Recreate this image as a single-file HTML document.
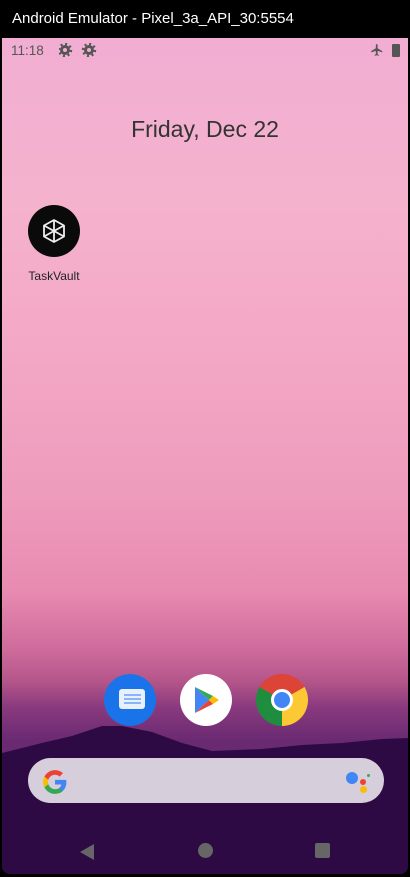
<!DOCTYPE html>
<html><head><style>
*{margin:0;padding:0;box-sizing:border-box}
body{width:410px;height:877px;background:#000;position:relative;overflow:hidden;font-family:"Liberation Sans",sans-serif}
.title{position:absolute;left:12px;top:10px;color:#fff;font-size:15px}
.screen{position:absolute;left:2px;top:38px;width:406px;height:836px;border-radius:0 0 8px 8px;overflow:hidden;
background:linear-gradient(180deg,#f1aed2 0%,#f5b2cd 20%,#f3a6c4 40%,#ee9bbc 55%,#e88bb1 66%,#cf6c9c 73%,#b4558a 77%,#8a3a7e 80%,#6a2a72 84%)}
.st{position:absolute;top:5px;left:9px;color:#555;font-size:13.5px}
.date{position:absolute;top:78px;width:100%;text-align:center;font-size:23px;color:#333}
.lbl{position:absolute;left:0;width:104px;text-align:center;top:231px;font-size:12px;color:#222}
.search{position:absolute;left:26px;top:720px;width:356px;height:45px;border-radius:23px;background:#d6cfdb}
</style></head><body>
<div class="title">Android Emulator - Pixel_3a_API_30:5554</div>
<div class="screen">
<div class="st">11:18</div>
<svg style="position:absolute;left:57px;top:5px" width="40" height="14" viewBox="0 0 40 14"><g fill="#555"><circle cx="6" cy="7" r="5"/><circle cx="30" cy="7" r="5"/></g><g fill="#f2aed0"><circle cx="6" cy="7" r="2"/><circle cx="30" cy="7" r="2"/></g><g stroke="#555" stroke-width="2.4" stroke-dasharray="2 2.7"><circle cx="6" cy="7" r="6" fill="none"/><circle cx="30" cy="7" r="6" fill="none"/></g></svg>
<svg style="position:absolute;left:368px;top:5px" width="14" height="14" viewBox="0 0 24 24"><path fill="#555" d="M21 16v-2l-8-5V3.5a1.5 1.5 0 0 0-3 0V9l-8 5v2l8-2.5V19l-2 1.5V22l3.5-1 3.5 1v-1.5L13 19v-5.5z"/></svg>
<div style="position:absolute;left:390px;top:6px;width:8px;height:13px;background:#555;border-radius:1px"></div>
<div class="date">Friday, Dec 22</div>
<div style="position:absolute;left:26px;top:167px;width:52px;height:52px;border-radius:50%;background:#0a0a0a"></div>
<svg style="position:absolute;left:38px;top:179px" width="28" height="28" viewBox="0 0 28 28" fill="none" stroke="#eee" stroke-width="1.8" stroke-linejoin="round"><path d="M14 3 24 8.5v11L14 25 4 19.5v-11zM4 8.5 14 14 24 8.5M14 14v11M4 19.5 14 14 24 19.5M14 3v11"/></svg>
<div class="lbl" style="left:0">TaskVault</div>
<svg style="position:absolute;left:0;top:680px" width="406" height="156" viewBox="0 0 406 156"><path fill="#2d0a44" d="M0 35 L40 25 70 18 100 8 120 8 150 14 180 25 210 33 260 31 300 27 340 25 380 21 406 20 V156 H0z"/></svg>
<div style="position:absolute;left:102px;top:636px;width:52px;height:52px;border-radius:50%;background:#1a73e8"></div>
<div style="position:absolute;left:117px;top:651px;width:26px;height:20px;border-radius:3px;background:#e8f0fe"></div>
<div style="position:absolute;left:122px;top:656px;width:17px;height:2px;background:#8ab4f8;box-shadow:0 4px #8ab4f8,0 8px #8ab4f8"></div>
<div style="position:absolute;left:178px;top:636px;width:52px;height:52px;border-radius:50%;background:#fff"></div>
<svg style="position:absolute;left:191px;top:647px" width="28" height="30" viewBox="0 0 28 30"><path fill="#4285f4" d="M2 2 16 15 2 28z"/><path fill="#34a853" d="M2 2 20 11 16 15z"/><path fill="#ea4335" d="M2 28 16 15 20 19z"/><path fill="#fbbc04" d="M20 11 26 15 20 19 16 15z"/></svg>
<div style="position:absolute;left:254px;top:636px;width:52px;height:52px;border-radius:50%;background:conic-gradient(from -60deg,#db4437 0 120deg,#fcc934 120deg 240deg,#1e8e3e 240deg 360deg)"></div>
<div style="position:absolute;left:269px;top:651px;width:22px;height:22px;border-radius:50%;background:#4285f4;border:3px solid #fff"></div>
<div class="search"></div>
<svg style="position:absolute;left:40px;top:731px" width="26" height="26" viewBox="0 0 48 48"><path fill="#4285f4" d="M45 24.5c0-1.6-.1-3-.4-4.5H24v8.5h11.8c-.5 2.7-2 5-4.4 6.6v5.5h7C42.6 36.7 45 31.1 45 24.5z"/><path fill="#34a853" d="M24 46c5.9 0 10.9-2 14.5-5.3l-7-5.5c-2 1.3-4.5 2.1-7.4 2.1-5.7 0-10.6-3.9-12.3-9.1H4.5v5.7C8.1 41.1 15.5 46 24 46z"/><path fill="#fbbc05" d="M11.7 28.2c-.4-1.3-.7-2.7-.7-4.2s.3-2.9.7-4.2v-5.7H4.5C3 17.1 2 20.4 2 24s1 6.9 2.5 9.9z"/><path fill="#ea4335" d="M24 10.7c3.2 0 6.1 1.1 8.4 3.3l6.3-6.3C34.9 4.2 29.9 2 24 2 15.5 2 8.1 6.9 4.5 14.1l7.2 5.7c1.7-5.2 6.6-9.1 12.3-9.1z"/></svg>
<div style="position:absolute;left:344px;top:734px;width:12px;height:12px;border-radius:50%;background:#4285f4"></div>
<div style="position:absolute;left:358px;top:741px;width:6px;height:6px;border-radius:50%;background:#ea4335"></div>
<div style="position:absolute;left:358px;top:748px;width:7px;height:7px;border-radius:50%;background:#fbbc04"></div>
<div style="position:absolute;left:365px;top:736px;width:3px;height:3px;border-radius:50%;background:#34a853"></div>
<svg style="position:absolute;left:77px;top:805px" width="16" height="18"><path fill="#666" d="M15 1v16L1 9z"/></svg>
<div style="position:absolute;left:196px;top:805px;width:15px;height:15px;border-radius:50%;background:#666"></div>
<div style="position:absolute;left:313px;top:805px;width:15px;height:15px;border-radius:2px;background:#666"></div>
</div>
</body></html>
